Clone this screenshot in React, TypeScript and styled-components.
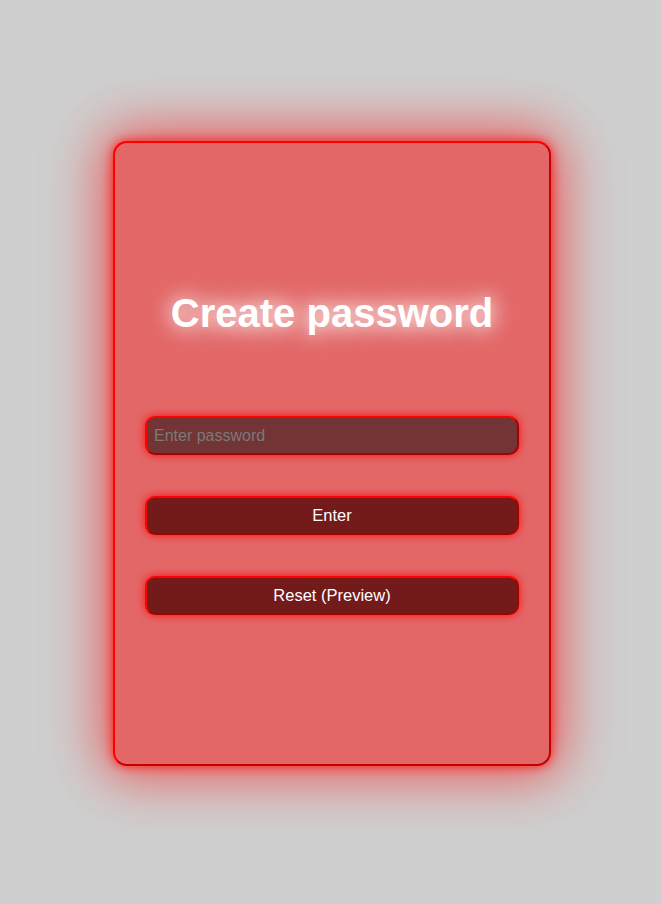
import React from "react";
import styled, { createGlobalStyle } from "styled-components";

const Global = createGlobalStyle`
  html, body { margin: 0; padding: 0; }
  body {
    background: #cfcfcf;
    font-family: "Liberation Sans", Arial, sans-serif;
  }
`;

const Page = styled.div`
  min-height: 904px;
  display: flex;
  justify-content: center;
  padding-top: 141px;
  box-sizing: border-box;
  padding-left: 3px;
`;

const Card = styled.div`
  width: 438px;
  height: 625px;
  box-sizing: border-box;
  background: #e36767;
  border: 2px solid;
  border-color: #ff0000 #c40000 #c40000 #ff0000;
  border-radius: 14px;
  box-shadow: 0 0 12px rgba(255, 0, 0, 0.8), 0 0 55px 10px rgba(255, 0, 0, 0.6);
  display: flex;
  flex-direction: column;
  align-items: stretch;
  padding: 147px 30px 0;
`;

const Title = styled.h1`
  margin: 0 0 80px;
  text-align: center;
  color: #ffffff;
  font-size: 40px;
  line-height: 46px;
  font-weight: bold;
  text-shadow: 0 0 18px rgba(255, 255, 255, 0.9), 0 0 30px rgba(255, 255, 255, 0.7);
`;

const Field = styled.input`
  height: 39px;
  box-sizing: border-box;
  border: 2px solid;
  border-color: #ff0000 #a80000 #a80000 #ff0000;
  border-radius: 10px;
  background: #723434;
  padding: 0 7px;
  font-family: "Liberation Sans", Arial, sans-serif;
  font-size: 16px;
  color: #ffffff;
  box-shadow: 0 0 8px rgba(255, 0, 0, 0.9);
  outline: none;
  margin-bottom: 41px;
  &::placeholder { color: #7a7a7a; }
`;

const Button = styled.button`
  height: 39px;
  box-sizing: border-box;
  border: 2px solid;
  border-color: #ff0000 #a80000 #a80000 #ff0000;
  border-radius: 10px;
  background: #731a1a;
  color: #ffffff;
  font-family: "Liberation Sans", Arial, sans-serif;
  font-size: 16.5px;
  box-shadow: 0 0 8px rgba(255, 0, 0, 0.9);
  cursor: pointer;
  margin-bottom: 41px;
`;

export default function App() {
  return (
    <>
      <Global />
      <Page>
        <Card>
          <Title>Create password</Title>
          <Field type="password" placeholder="Enter password" />
          <Button>Enter</Button>
          <Button>Reset (Preview)</Button>
        </Card>
      </Page>
    </>
  );
}
